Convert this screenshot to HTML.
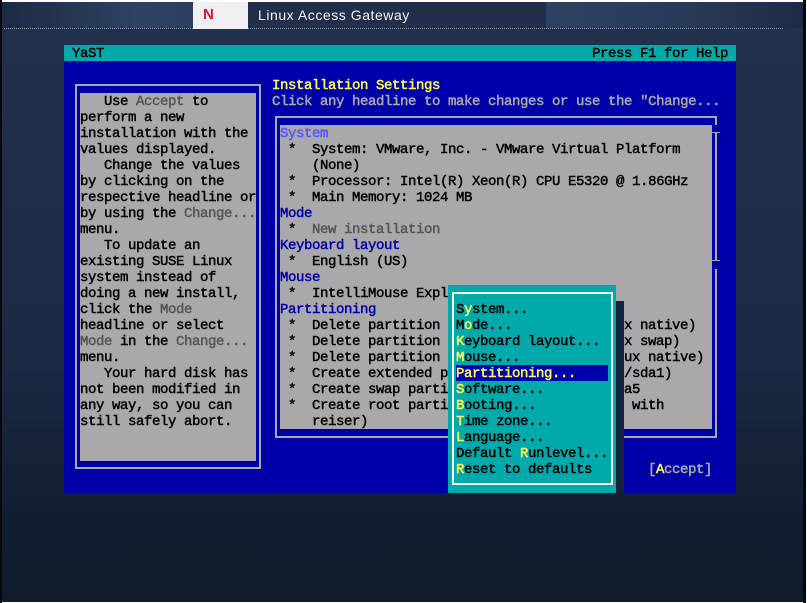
<!DOCTYPE html>
<html><head><meta charset="utf-8"><style>
html,body{margin:0;padding:0;background:#fff}
#p{position:relative;width:807px;height:603px;overflow:hidden;background:#fff}
#p div{position:absolute}
.r{font:normal 14px/16px "Liberation Mono",monospace;letter-spacing:-.4px;-webkit-text-stroke:.45px currentColor;white-space:pre;height:16px;color:#000;margin-top:1px}
.g{color:#555}.y{color:#ff5}.l{color:#55f}.b{color:#00a}.w{color:#aaa}
</style></head><body><div id="p">
<div style="left:2px;top:2px;width:801px;height:600px;background:linear-gradient(180deg,#22324e 0,#1e2e4a 30%,#1a2a45 60%,#131f32 82%,#101b2a 100%)"></div>
<div style="left:0;top:0;width:2px;height:603px;background:#05070c"></div>
<div style="left:803px;top:0;width:3px;height:603px;background:#05070c"></div>
<div style="left:2px;top:2px;width:801px;height:26px;background:linear-gradient(90deg,#1c2a44 0,#2f4262 17%,#2c3e5c 24%)"></div>
<div style="left:248px;top:2px;width:298px;height:26px;background:#222f4b"></div>
<div style="left:546px;top:2px;width:257px;height:26px;background:linear-gradient(90deg,#2d4161 0,#2a3b5a 50%,#1c2b47 100%)"></div>
<div style="left:4px;top:28px;width:780px;height:1px;background:repeating-linear-gradient(90deg,#8c97a8 0 1px,transparent 1px 2px)"></div>
<div style="left:193px;top:2px;width:55px;height:27px;background:#f0eff1"></div>
<div style="left:203px;top:7px;font:bold 15px/16px 'Liberation Sans',sans-serif;color:#d5142c">N</div>
<div style="left:258px;top:7px;font:14px/16px 'Liberation Sans',sans-serif;letter-spacing:.55px;color:#f2f4f7;white-space:pre">Linux Access Gateway</div>

<div style="left:64px;top:45px;width:672px;height:16px;background:#00aaaa"></div>
<div style="left:64px;top:61px;width:672px;height:432px;background:#0000aa"></div>
<div style="left:75px;top:84px;width:182px;height:381px;border:2px solid #aaa"></div>
<div style="left:80px;top:93px;width:176px;height:368px;background:#aaa8aa"></div>
<div style="left:275px;top:116px;width:440px;height:2px;background:#aaa"></div>
<div style="left:275px;top:116px;width:2px;height:322px;background:#aaa"></div>
<div style="left:275px;top:436px;width:442px;height:2px;background:#aaa"></div>
<div style="left:715px;top:116px;width:2px;height:9px;background:#aaa"></div>
<div style="left:712px;top:132px;width:8px;height:1px;background:#aaa"></div>
<div style="left:715px;top:132px;width:2px;height:128px;background:#aaa"></div>
<div style="left:712px;top:260px;width:8px;height:1px;background:#aaa"></div>
<div style="left:715px;top:269px;width:2px;height:169px;background:#aaa"></div>
<div style="left:280px;top:125px;width:432px;height:304px;background:#aaa8aa"></div>

<div class="r" style="left:72px;top:45px">YaST</div>
<div class="r" style="left:592px;top:45px">Press F1 for Help</div>
<div class="r y" style="left:272px;top:77px">Installation Settings</div>
<div class="r w" style="left:272px;top:93px">Click any headline to make changes or use the "Change...</div>

<div class="r" style="left:80px;top:93px">   Use <span class="g">Accept</span> to</div>
<div class="r" style="left:80px;top:109px">perform a new</div>
<div class="r" style="left:80px;top:125px">installation with the</div>
<div class="r" style="left:80px;top:141px">values displayed.</div>
<div class="r" style="left:80px;top:157px">   Change the values</div>
<div class="r" style="left:80px;top:173px">by clicking on the</div>
<div class="r" style="left:80px;top:189px">respective headline or</div>
<div class="r" style="left:80px;top:205px">by using the <span class="g">Change...</span></div>
<div class="r" style="left:80px;top:221px">menu.</div>
<div class="r" style="left:80px;top:237px">   To update an</div>
<div class="r" style="left:80px;top:253px">existing SUSE Linux</div>
<div class="r" style="left:80px;top:269px">system instead of</div>
<div class="r" style="left:80px;top:285px">doing a new install,</div>
<div class="r" style="left:80px;top:301px">click the <span class="g">Mode</span></div>
<div class="r" style="left:80px;top:317px">headline or select</div>
<div class="r" style="left:80px;top:333px"><span class="g">Mode</span> in the <span class="g">Change...</span></div>
<div class="r" style="left:80px;top:349px">menu.</div>
<div class="r" style="left:80px;top:365px">   Your hard disk has</div>
<div class="r" style="left:80px;top:381px">not been modified in</div>
<div class="r" style="left:80px;top:397px">any way, so you can</div>
<div class="r" style="left:80px;top:413px">still safely abort.</div>

<div class="r l" style="left:280px;top:125px">System</div>
<div class="r" style="left:280px;top:141px"> *  System: VMware, Inc. - VMware Virtual Platform</div>
<div class="r" style="left:280px;top:157px">    (None)</div>
<div class="r" style="left:280px;top:173px"> *  Processor: Intel(R) Xeon(R) CPU E5320 @ 1.86GHz</div>
<div class="r" style="left:280px;top:189px"> *  Main Memory: 1024 MB</div>
<div class="r b" style="left:280px;top:205px">Mode</div>
<div class="r" style="left:280px;top:221px"> *  <span class="g">New installation</span></div>
<div class="r b" style="left:280px;top:237px">Keyboard layout</div>
<div class="r" style="left:280px;top:253px"> *  English (US)</div>
<div class="r b" style="left:280px;top:269px">Mouse</div>
<div class="r" style="left:280px;top:285px"> *  IntelliMouse Explorer</div>
<div class="r b" style="left:280px;top:301px">Partitioning</div>
<div class="r" style="left:280px;top:317px"> *  Delete partition</div>
<div class="r" style="left:280px;top:333px"> *  Delete partition</div>
<div class="r" style="left:280px;top:349px"> *  Delete partition</div>
<div class="r" style="left:280px;top:365px"> *  Create extended partition</div>
<div class="r" style="left:280px;top:381px"> *  Create swap partition</div>
<div class="r" style="left:280px;top:397px"> *  Create root partition</div>
<div class="r" style="left:280px;top:413px">    reiser)</div>
<div class="r" style="left:624px;top:317px">x native)</div>
<div class="r" style="left:624px;top:333px">x swap)</div>
<div class="r" style="left:624px;top:349px">ux native)</div>
<div class="r" style="left:624px;top:365px">/sda1)</div>
<div class="r" style="left:624px;top:381px">a5</div>
<div class="r" style="left:632px;top:397px">with</div>
<div class="r w" style="left:648px;top:461px">[<span class="y">A</span>ccept]</div>

<div style="left:616px;top:301px;width:8px;height:192px;background:#16223a"></div>
<div style="left:448px;top:285px;width:168px;height:208px;background:#00aaaa"></div>
<div style="left:452px;top:292px;width:159px;height:191px;border:1px solid #fff;box-shadow:inset 0 0 0 1px #fff"></div>
<div style="left:456px;top:365px;width:152px;height:16px;background:#0000aa"></div>
<div class="r" style="left:456px;top:301px">S<span class="y">y</span>stem...</div>
<div class="r" style="left:456px;top:317px">M<span class="y">o</span>de...</div>
<div class="r" style="left:456px;top:333px"><span class="y">K</span>eyboard layout...</div>
<div class="r" style="left:456px;top:349px"><span class="y">M</span>ouse...</div>
<div class="r y" style="left:456px;top:365px">Partitioning...</div>
<div class="r" style="left:456px;top:381px"><span class="y">S</span>oftware...</div>
<div class="r" style="left:456px;top:397px"><span class="y">B</span>ooting...</div>
<div class="r" style="left:456px;top:413px"><span class="y">T</span>ime zone...</div>
<div class="r" style="left:456px;top:429px"><span class="y">L</span>anguage...</div>
<div class="r" style="left:456px;top:445px">Default <span class="y">R</span>unlevel...</div>
<div class="r" style="left:456px;top:461px"><span class="y">R</span>eset to defaults</div>
</div></body></html>
